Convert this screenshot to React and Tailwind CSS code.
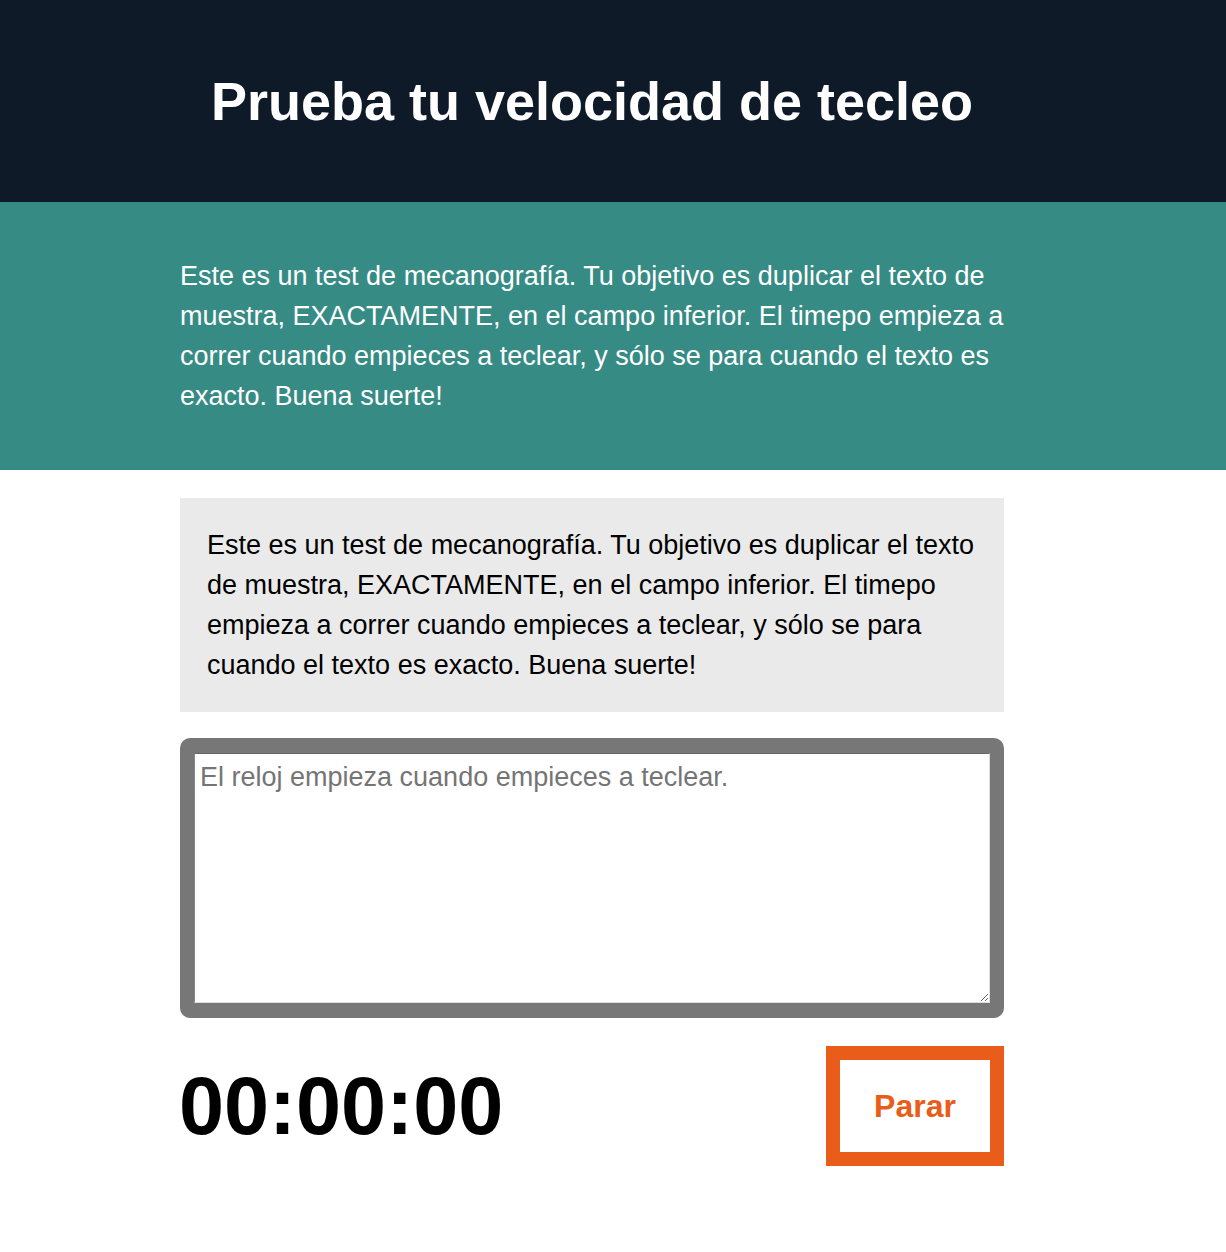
import { useState } from 'react';

const sample =
  'Este es un test de mecanografía. Tu objetivo es duplicar el texto de muestra, EXACTAMENTE, en el campo inferior. El timepo empieza a correr cuando empieces a teclear, y sólo se para cuando el texto es exacto. Buena suerte!';

export default function App() {
  const [text, setText] = useState('');

  return (
    <div className="min-h-[1252px] bg-white font-['Liberation_Sans',Arial,sans-serif]">
      <header className="bg-[#0f1a29] h-[202px] flex items-center">
        <div className="ml-[180px] w-[824px] text-center">
          <h1 className="text-white font-bold text-[54px] leading-none">Prueba tu velocidad de tecleo</h1>
        </div>
      </header>

      <section className="bg-[#378b85] py-[54px]">
        <p className="ml-[180px] w-[824px] text-white text-[27px] leading-[40px]">{sample}</p>
      </section>

      <main className="ml-[180px] w-[824px] pt-[28px]">
        <div className="bg-[#eaeaea] px-[27px] py-[27px]">
          <p className="text-black text-[27px] leading-[40px]">{sample}</p>
        </div>

        <div className="mt-[26px] bg-[#777777] rounded-[10px] px-[14px] py-[15px]">
          <textarea
            value={text}
            onChange={(e) => setText(e.target.value)}
            placeholder="El reloj empieza cuando empieces a teclear."
            className="block w-full h-[250px] bg-white border border-t-[#666] border-l-[#888] border-r-[#ddd] border-b-[#ddd] px-[5px] pt-[8px] text-[27px] leading-[1.15] text-black placeholder:text-[#757575] outline-none"
          />
        </div>

        <div className="mt-[28px] flex items-center justify-between">
          <div className="text-black font-bold text-[81px] leading-none -ml-[1px]">00:00:00</div>
          <button className="w-[178px] h-[120px] border-[14px] border-[#e95c1a] bg-white text-[#e95c1a] font-bold text-[32px]">
            Parar
          </button>
        </div>
      </main>
    </div>
  );
}
